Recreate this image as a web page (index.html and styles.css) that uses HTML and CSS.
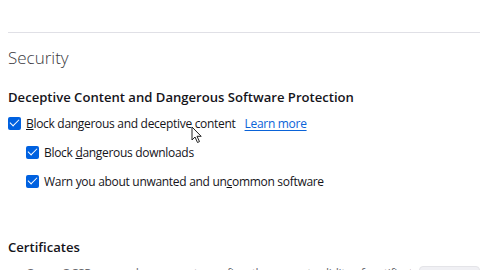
FILE: index.html
```html
<!DOCTYPE html>
<html lang="en">

<head>
  <meta charset="UTF-8" />
  <meta name="viewport" content="width=device-width, initial-scale=1.0"/>
  <title>Security settings</title>
  <link rel="stylesheet" href="styles.css">
</head>

<body>

  <div class="divider"></div>

  <h1 class="section-title">Security</h1>

  <!-- Safe browsing -->
  <div class="group">
    <h2>Deceptive Content and Dangerous Software Protection</h2>

    <div class="check-row">
      <span class="box checked"></span>
      <label><u>B</u>lock dangerous and deceptive content</label>
      <a href="#" class="learn">Learn more</a>
    </div>

    <div class="check-row nested">
      <span class="box checked"></span>
      <label>Block <u>d</u>angerous downloads</label>
    </div>

    <div class="check-row nested">
      <span class="box checked"></span>
      <label>Warn you about unwanted and un<u>c</u>ommon software</label>
    </div>
  </div>

  <!-- Certificates -->
  <div class="group certs">
    <h2>Certificates</h2>
    <div class="cert-row">
      <span class="cert-text">Query OCSP responder servers to confirm the current validity of certificates</span>
      <span class="btn"></span>
    </div>
  </div>

  <svg class="cursor" width="12" height="18" viewBox="0 0 12 18">
    <path d="M1 1 L1 14 L4 11 L6.5 16.5 L8.5 15.6 L6 10.3 L10.2 10.3 Z" fill="#fff" stroke="#222" stroke-width="1" stroke-linejoin="round"/>
  </svg>

</body>
</html>
```

FILE: styles.css
```css
:root {
  --text: #15141a;
  --blue: #0061e0;
  --link: #0a63d8;
  --line: #e0e0e6;
}

* {
  margin: 0;
  padding: 0;
  box-sizing: border-box;
}

body {
  font-family: 'Open Sans', 'Noto Sans', sans-serif;
  font-size: 12px;
  letter-spacing: -0.3px;
  color: var(--text);
  background: #ffffff;
  padding: 0 0 0 8px;
  width: 480px;
  height: 270px;
  overflow: hidden;
  position: relative;
}

.divider {
  margin-top: 32px;
  border-top: 1px solid var(--line);
}

.section-title {
  font-size: 17px;
  font-weight: 300;
  letter-spacing: 0;
  color: #3a3940;
  margin-top: 14px;
  line-height: 22px;
}

.group h2 {
  font-size: 13.1px;
  font-weight: 600;
  letter-spacing: 0;
  line-height: 18px;
}

.group {
  margin-top: 19px;
}

.check-row {
  display: flex;
  align-items: center;
  height: 18px;
  margin-top: 8px;
}

.check-row.nested {
  margin-left: 18px;
}

.check-row + .check-row.nested {
  margin-top: 11px;
}

.box {
  width: 13px;
  height: 13px;
  border-radius: 2px;
  margin-right: 5px;
  flex-shrink: 0;
  background: var(--blue);
  position: relative;
}

.box.checked::after {
  content: "";
  position: absolute;
  left: 2px;
  top: 2px;
  width: 8px;
  height: 4px;
  border-left: 1.6px solid #fff;
  border-bottom: 1.6px solid #fff;
  transform: rotate(-45deg);
}

label u {
  text-decoration-thickness: 1px;
}

.learn {
  margin-left: 9px;
  color: var(--link);
  text-decoration: underline;
  text-underline-offset: 2px;
}

.certs {
  margin-top: 48px;
}

.cert-row {
  display: flex;
  align-items: flex-start;
  margin-top: 9px;
  margin-left: 18px;
}

.cert-text {
  flex-grow: 1;
  white-space: nowrap;
  overflow: hidden;
  color: #6a6a70;
}

.btn {
  margin-top: 1px;
  margin-left: 8px;
  flex-shrink: 0;
  width: 61px;
  height: 24px;
  background: #f0f0f4;
  border: 1px solid #e4e4e8;
  border-radius: 4px;
}

.cursor {
  position: absolute;
  left: 191px;
  top: 126px;
}
```
